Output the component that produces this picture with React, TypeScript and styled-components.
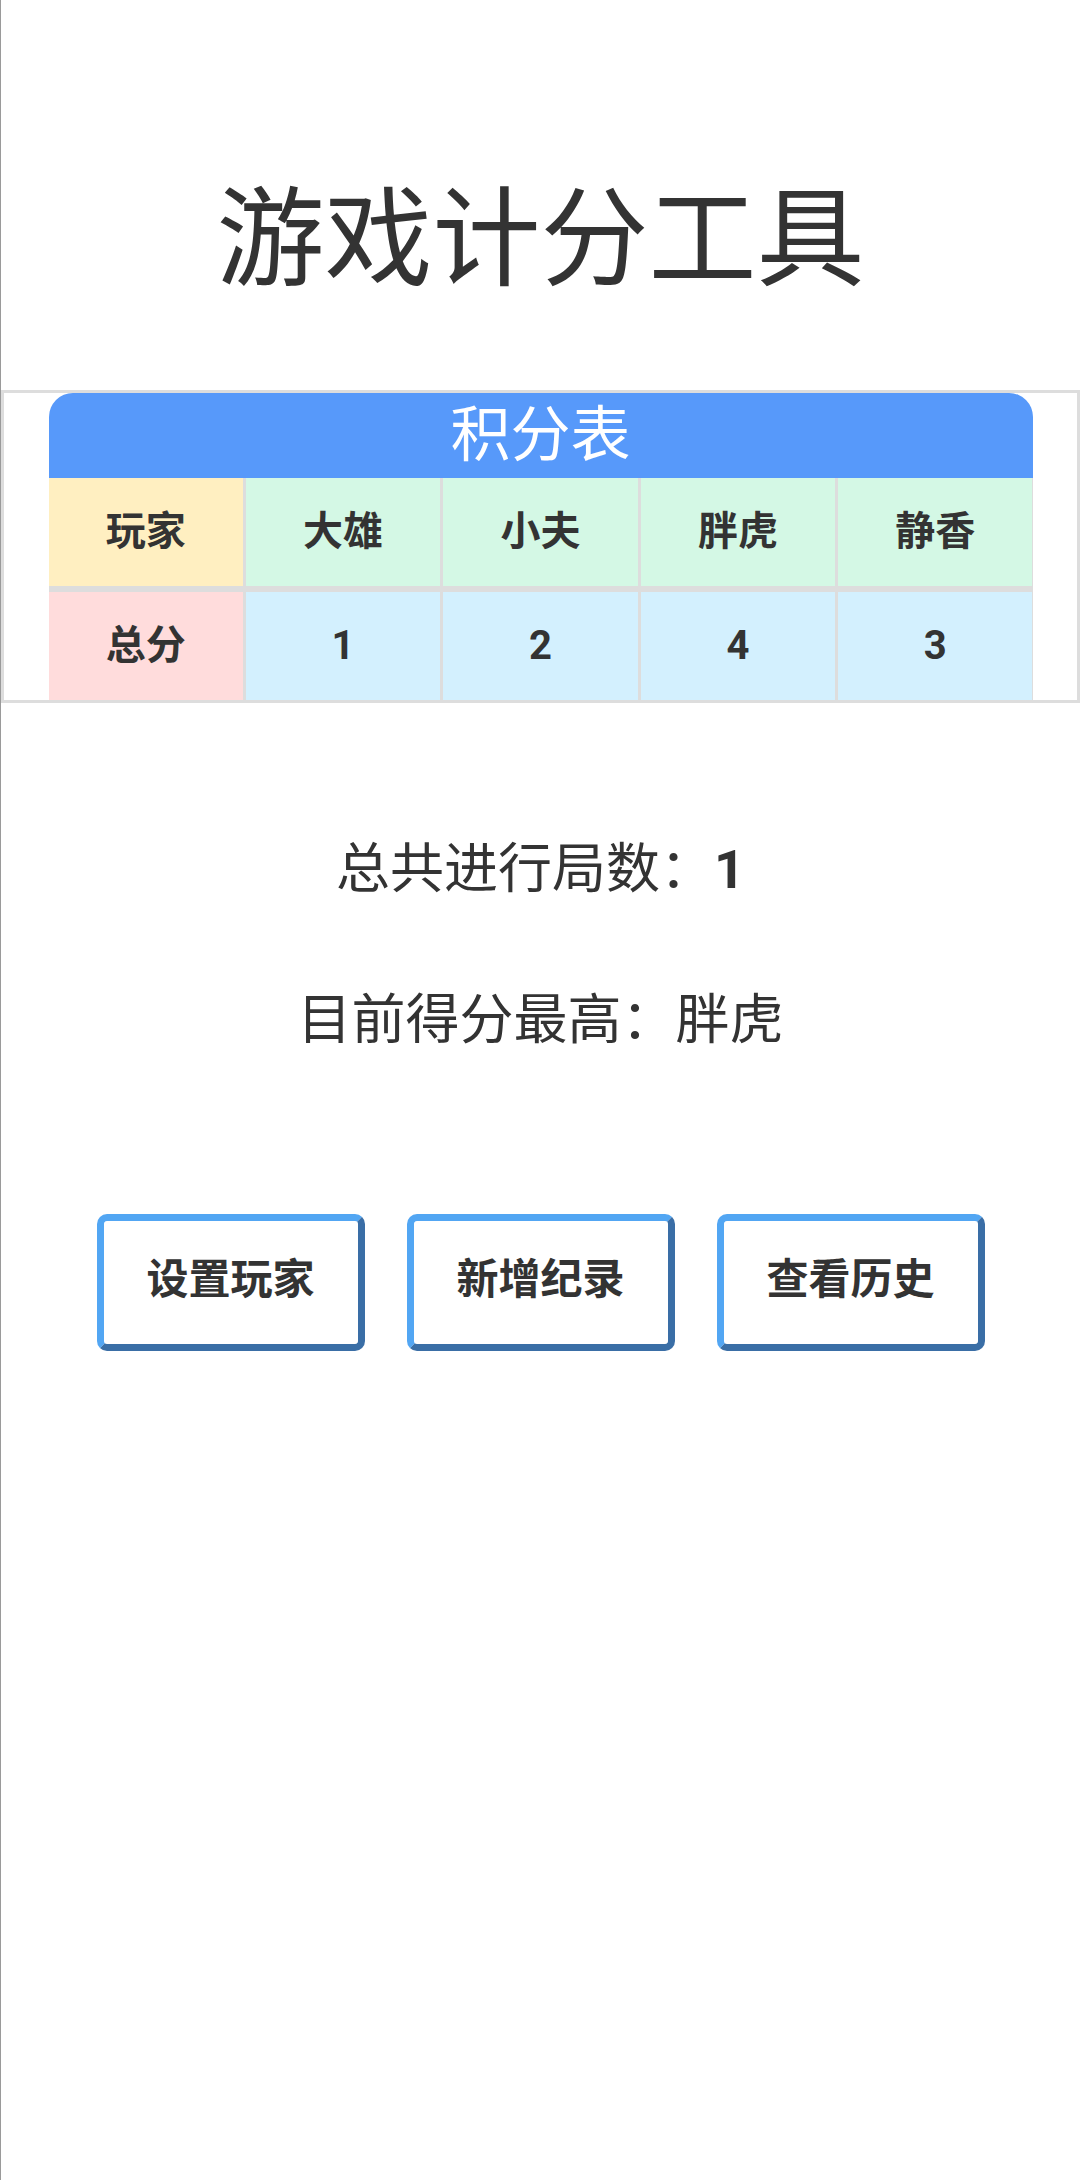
import React from "react"
import styled, { createGlobalStyle } from "styled-components"

const GlobalStyle = createGlobalStyle`
	html, body {
		margin: 0;
		padding: 0;
		background: #ffffff;
	}
	body {
		font-family: Roboto, "Noto Sans CJK SC", "Noto Sans", sans-serif;
		color: #333333;
	}
`

const players = [
	{ name: "大雄", score: 1 },
	{ name: "小夫", score: 2 },
	{ name: "胖虎", score: 4 },
	{ name: "静香", score: 3 },
]

const Page = styled.div`
	width: 1079px;
	min-height: 2180px;
	border-left: 1px solid #9a9a9a;
	display: flex;
	flex-direction: column;
	align-items: stretch;
`

const Title = styled.h1`
	margin: 186px 0 0;
	font-size: 108px;
	line-height: 1;
	font-weight: 400;
	text-align: center;
	color: #333333;
`

const BoardFrame = styled.section`
	margin-top: 96px;
	border: 3px solid #dddddd;
	display: flex;
	justify-content: center;
`

const Board = styled.div`
	width: 984px;
	display: flex;
	flex-direction: column;
`

const BoardHeader = styled.div`
	height: 85px;
	background: #5799fa;
	border-radius: 24px 24px 0 0;
	color: #ffffff;
	font-size: 60px;
	line-height: 1;
	display: flex;
	align-items: center;
	justify-content: center;
`

const Grid = styled.div`
	display: grid;
	grid-template-columns: repeat(5, 1fr);
	column-gap: 3px;
	row-gap: 6px;
	background: #dddddd;
`

const Cell = styled.div<{ $bg: string }>`
	height: 108px;
	background: ${(p) => p.$bg};
	display: flex;
	align-items: center;
	justify-content: center;
	font-size: 40px;
	font-weight: 700;
	line-height: 1;
	color: #333333;
`

const Stat = styled.p<{ $top: number }>`
	margin: ${(p) => p.$top}px 0 0;
	font-size: 54px;
	line-height: 1;
	text-align: center;
	color: #333333;
`

const Strong = styled.b`
	font-weight: 700;
`

const ButtonRow = styled.div`
	margin-top: 166px;
	display: flex;
	justify-content: center;
	gap: 42px;
`

const ActionButton = styled.button`
	width: 268px;
	height: 137px;
	box-sizing: border-box;
	background: #ffffff;
	border: 7px solid;
	border-color: #52a6f3 #3a6ea6 #3a6ea6 #52a6f3;
	border-radius: 10px;
	font-family: inherit;
	font-size: 42px;
	font-weight: 700;
	line-height: 1;
	color: #333333;
	cursor: pointer;
	padding: 0 0 6px;
`

export default function App() {
	return (
		<>
			<GlobalStyle />
			<Page>
				<Title>游戏计分工具</Title>

				<BoardFrame>
					<Board>
						<BoardHeader>积分表</BoardHeader>
						<Grid>
							<Cell $bg="#ffefc1">玩家</Cell>
							{players.map((p) => (
								<Cell key={p.name} $bg="#d4f8e5">
									{p.name}
								</Cell>
							))}
							<Cell $bg="#ffdcdc">总分</Cell>
							{players.map((p) => (
								<Cell key={p.name} $bg="#d3f0fe">
									{p.score}
								</Cell>
							))}
						</Grid>
					</Board>
				</BoardFrame>

				<Stat $top={140}>
					总共进行局数：<Strong>1</Strong>
				</Stat>
				<Stat $top={97}>目前得分最高：胖虎</Stat>

				<ButtonRow>
					<ActionButton>设置玩家</ActionButton>
					<ActionButton>新增纪录</ActionButton>
					<ActionButton>查看历史</ActionButton>
				</ButtonRow>
			</Page>
		</>
	)
}
